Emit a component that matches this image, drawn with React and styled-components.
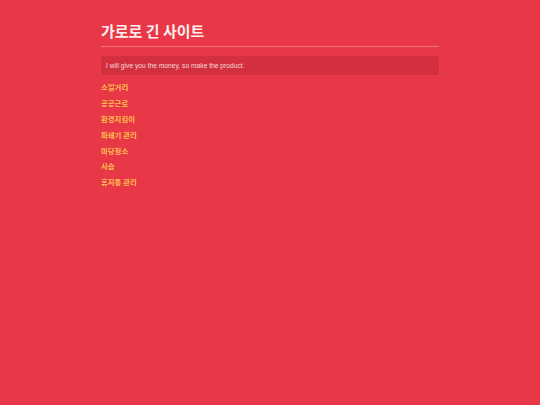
import React from "react";
import styled, { createGlobalStyle } from "styled-components";

const Global = createGlobalStyle`
  html, body { margin: 0; padding: 0; background: #e83847; }
  body { font-family: "Liberation Sans", "Noto Sans CJK KR", Arial, sans-serif; }
`;

const Page = styled.div`
  width: 338px;
  margin: 0 auto;
  padding-top: 22px;
`;

const Title = styled.h1`
  margin: 0;
  font-family: "Noto Sans CJK KR", sans-serif;
  font-size: 15px;
  font-weight: 700;
  color: #fdeeee;
  line-height: 18px;
  padding-bottom: 6px;
  border-bottom: 1px solid #f2717c;
`;

const Notice = styled.div`
  margin-top: 9px;
  background: #d2303e;
  border-radius: 2px;
  padding: 5px 5px;
  font-size: 6.7px;
  line-height: 9px;
  color: #f7dadd;
`;

const List = styled.ul`
  list-style: none;
  margin: 3.6px 0 0;
  padding: 0;
  display: flex;
  flex-direction: column;
`;

const Item = styled.li`
  height: 15.9px;
  display: flex;
  align-items: center;
`;

const Link = styled.a`
  font-family: "Noto Sans CJK KR", sans-serif;
  font-size: 7.4px;
  font-weight: 700;
  color: #ffbe4f;
  text-decoration: none;
`;

const items = ["소일거리", "공공근로", "환경지킴이", "파쇄기 관리", "마당청소", "사슴", "휴지통 관리"];

export default function App() {
  return (
    <>
      <Global />
      <Page>
        <Title>가로로 긴 사이트</Title>
        <Notice>I will give you the money, so make the product.</Notice>
        <List>
          {items.map((t) => (
            <Item key={t}>
              <Link href="#">{t}</Link>
            </Item>
          ))}
        </List>
      </Page>
    </>
  );
}
